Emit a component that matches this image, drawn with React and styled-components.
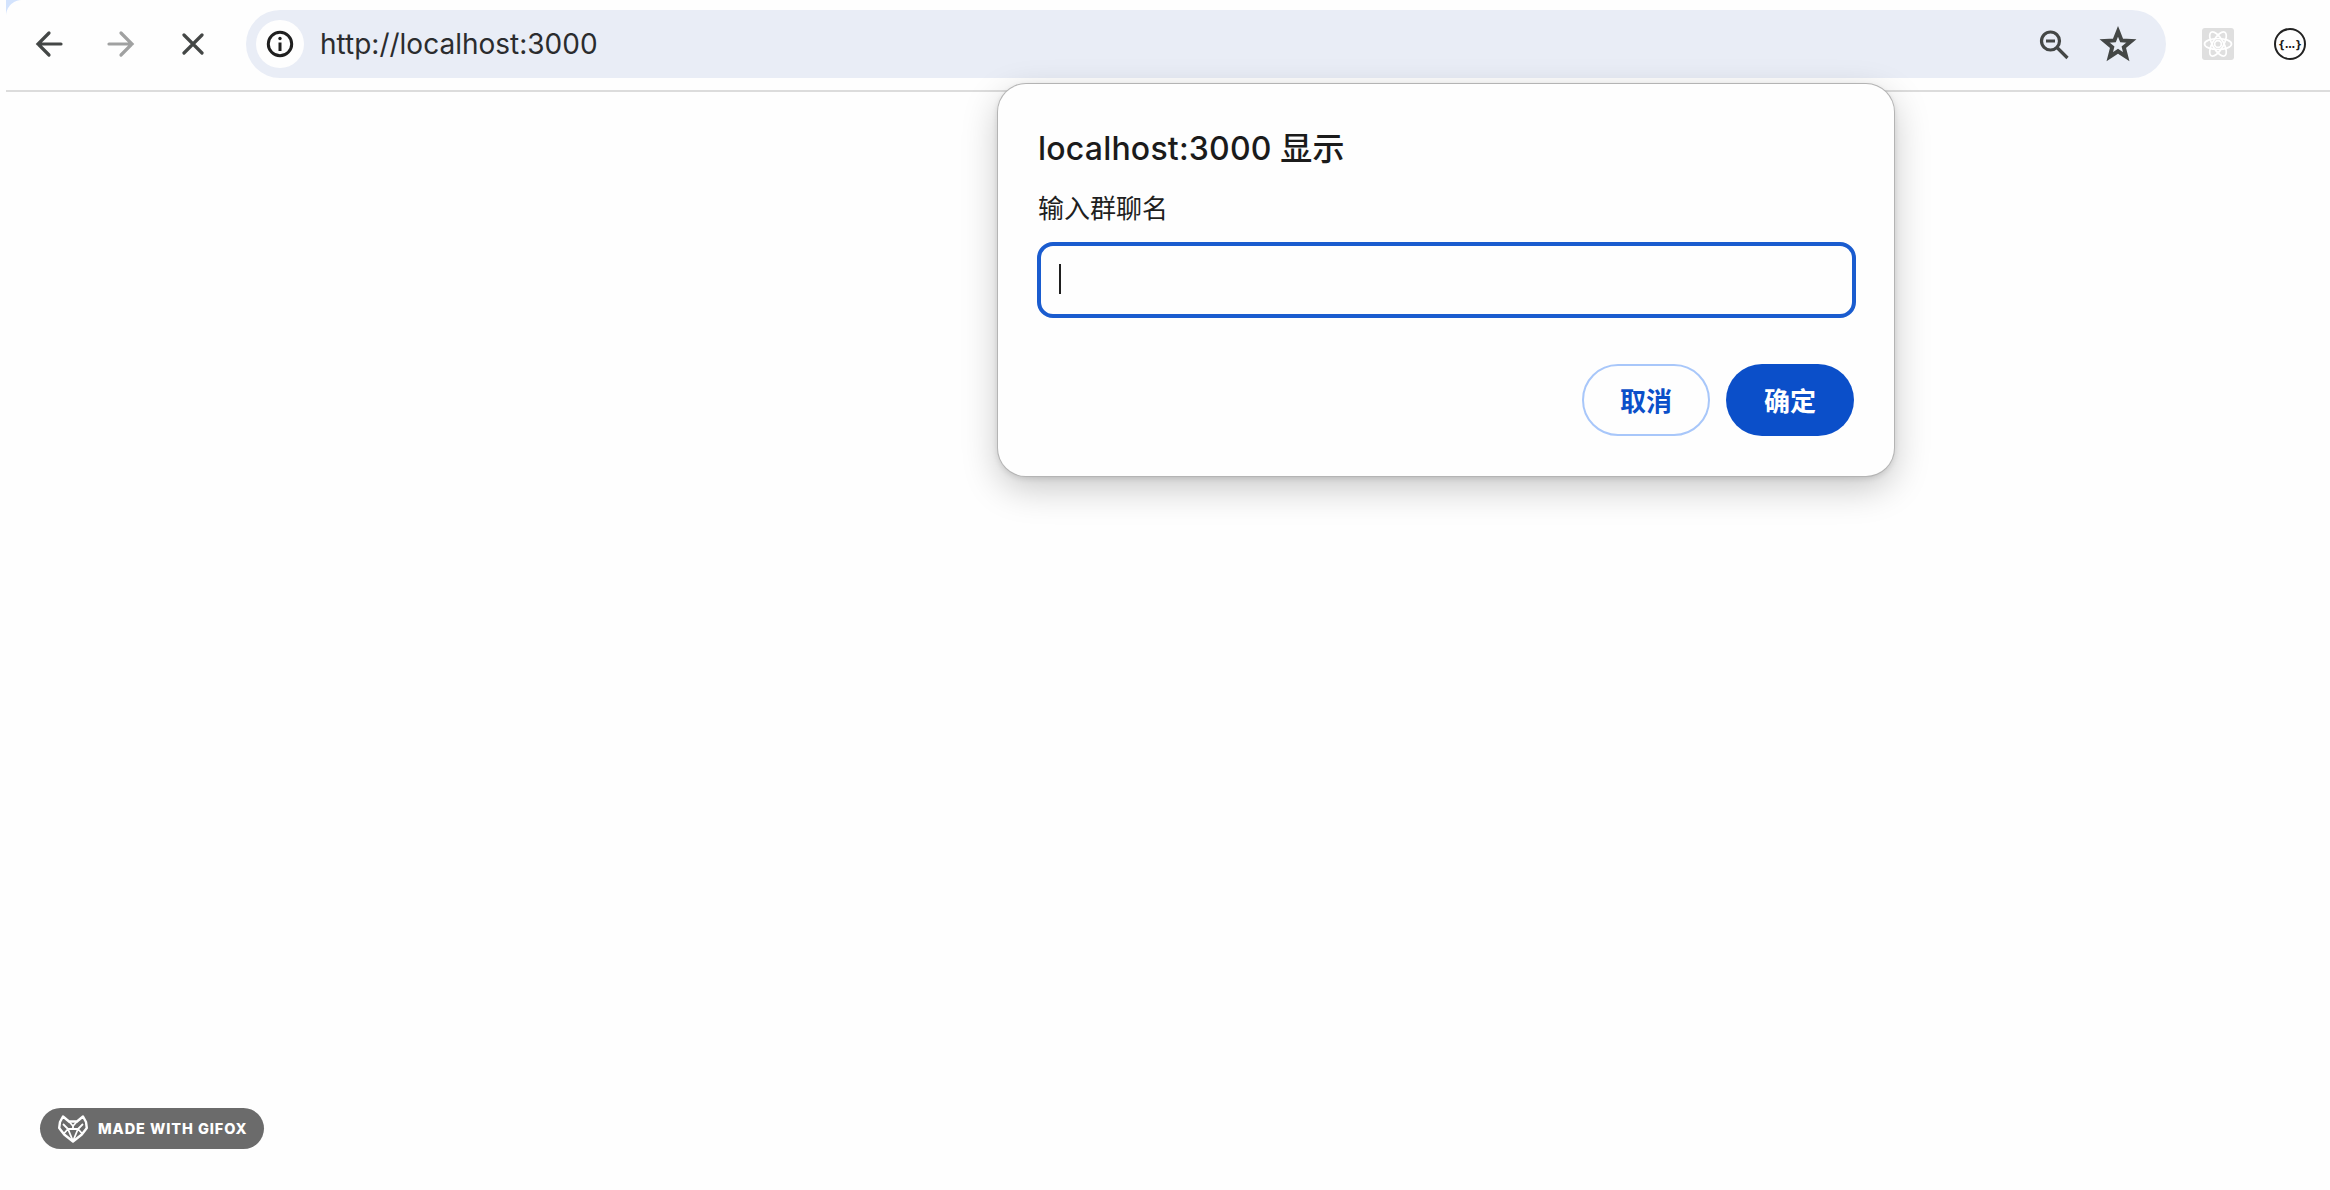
import React from 'react'
import styled, { createGlobalStyle } from 'styled-components'

const GlobalStyle = createGlobalStyle`
    html, body {
        background: #fefefe;
        height: 100%;
        margin: 0;
        overflow: hidden;
    }
    #root {
        height: 100%;
    }
`

const Page = styled.div`
    font-family: Inter, "Noto Sans CJK SC", sans-serif;
    height: 1190px;
    position: relative;
    width: 2330px;
`

const Toolbar = styled.header`
    align-items: center;
    border-bottom: 2px solid #dcdcdc;
    box-sizing: border-box;
    display: flex;
    height: 92px;
    margin-left: 6px;
    padding: 10px 0 12px 19px;
    position: relative;
`

const Corner = styled.span`
    background: radial-gradient(circle at 100% 100%, #fefefe 15.5px, #d3e3fd 16.5px);
    height: 16px;
    left: 0;
    position: absolute;
    top: 0;
    width: 16px;
`

const NavGroup = styled.nav`
    display: flex;
    gap: 24px;
    margin-right: 29px;
`

const IconButton = styled.span`
    align-items: center;
    color: ${props => props.$color || '#444746'};
    display: flex;
    height: 48px;
    justify-content: center;
    width: 48px;
`

const Omnibox = styled.div`
    align-items: center;
    background: #e9edf6;
    border-radius: 34px;
    box-sizing: border-box;
    display: flex;
    height: 68px;
    padding: 0 29px 0 10px;
    width: 1920px;
`

const SiteInfo = styled.span`
    align-items: center;
    background: #fefefe;
    border-radius: 50%;
    color: #1f1f1f;
    display: flex;
    height: 48px;
    justify-content: center;
    margin-right: 16px;
    width: 48px;
`

const Url = styled.span`
    color: #2b2c2e;
    flex: 1;
    font-size: 28px;
`

const OmniActions = styled.div`
    align-items: center;
    color: #444746;
    display: flex;
    gap: 26px;
`

const Extensions = styled.div`
    align-items: center;
    display: flex;
    gap: 40px;
    margin-left: 36px;
`

const ReactBadge = styled.span`
    align-items: center;
    background: #dfdfdf;
    border-radius: 3px;
    display: flex;
    height: 32px;
    justify-content: center;
    width: 32px;
`

const JsonBadge = styled.span`
    align-items: center;
    border: 2px solid #222;
    border-radius: 50%;
    box-sizing: border-box;
    color: #1a1a1a;
    display: flex;
    font-family: "DejaVu Sans", sans-serif;
    font-size: 10px;
    font-weight: 700;
    height: 32px;
    justify-content: center;
    width: 32px;
`

const Dialog = styled.section`
    background: #fefefe;
    border-radius: 28px;
    box-shadow: 0 0 0 1px #b4b4b4, 0 12px 36px rgba(0, 0, 0, 0.22), 0 2px 6px rgba(0, 0, 0, 0.14);
    box-sizing: border-box;
    height: 392px;
    left: 998px;
    padding: 0 40px;
    position: absolute;
    top: 84px;
    width: 896px;
`

const Title = styled.h1`
    color: #1b1b1b;
    font-size: 32px;
    font-weight: 500;
    letter-spacing: 0.2px;
    line-height: 40px;
    margin: 45px 0 0;
`

const Message = styled.p`
    color: #1f1f1f;
    font-size: 26px;
    line-height: 34px;
    margin: 23px 0 0;
`

const Field = styled.div`
    align-items: center;
    border: 4px solid #1a5ccf;
    border-radius: 16px;
    box-sizing: border-box;
    display: flex;
    height: 76px;
    margin: 16px -2px 0 -1px;
    padding: 0 0 2px 18px;
`

const Caret = styled.span`
    background: #1f1f1f;
    height: 30px;
    width: 2px;
`

const Actions = styled.div`
    display: flex;
    gap: 16px;
    justify-content: flex-end;
    margin: 46px 0 0;
`

const Button = styled.button`
    background: ${props => props.$primary ? '#0b4fc9' : '#fefefe'};
    border: ${props => props.$primary ? 'none' : '2px solid #a8c7fa'};
    border-radius: 36px;
    box-sizing: border-box;
    color: ${props => props.$primary ? '#ffffff' : '#0b4fc9'};
    font-family: Inter, "Noto Sans CJK SC", sans-serif;
    font-size: 26px;
    font-weight: 700;
    height: 72px;
    padding: 0 0 2px;
    width: 128px;
`

const GifoxBadge = styled.div`
    align-items: center;
    background: #6b6b6b;
    border-radius: 21px;
    bottom: 41px;
    box-sizing: border-box;
    color: #fff;
    display: flex;
    font-family: Inter, sans-serif;
    font-size: 14.5px;
    font-weight: 800;
    gap: 10px;
    height: 41px;
    left: 40px;
    letter-spacing: 0.93px;
    padding-left: 18px;
    position: absolute;
    width: 224px;
`

function BackIcon() {
    return (
        <svg width="28" height="28" viewBox="0 0 28 28" fill="none" stroke="currentColor" strokeWidth="3.2" strokeLinecap="round">
            <path d="M26 14H3M14 3L3 14l11 11" />
        </svg>
    )
}

function ForwardIcon() {
    return (
        <svg width="28" height="28" viewBox="0 0 28 28" fill="none" stroke="currentColor" strokeWidth="3.2" strokeLinecap="round">
            <path d="M2 14h23M14 3l11 11-11 11" />
        </svg>
    )
}

function CloseIcon() {
    return (
        <svg width="22" height="22" viewBox="0 0 22 22" fill="none" stroke="currentColor" strokeWidth="3.2" strokeLinecap="round">
            <path d="M2 2l18 18M20 2L2 20" />
        </svg>
    )
}

function InfoIcon() {
    return (
        <svg width="28" height="28" viewBox="0 0 28 28" fill="none" stroke="currentColor" strokeWidth="3">
            <circle cx="14" cy="14" r="11.7" />
            <path d="M14 12.5V21" />
            <circle cx="14" cy="8.5" r="1.7" fill="currentColor" stroke="none" />
        </svg>
    )
}

function ZoomOutIcon() {
    return (
        <svg width="40" height="40" viewBox="0 0 40 40" fill="none" stroke="currentColor" strokeWidth="3.2">
            <circle cx="17.5" cy="17" r="9" />
            <path d="M13 17h9M24.5 24L34.5 34" />
        </svg>
    )
}

function StarIcon() {
    return (
        <svg width="38" height="38" viewBox="0 0 36 36" fill="none" stroke="currentColor" strokeWidth="3.8" strokeLinejoin="miter">
            <path d="M18 6l3.4 8.6 9.2.6-7.1 5.9 2.3 9L18 24.9l-7.8 5.2 2.3-9-7.1-5.9 9.2-.6z" />
        </svg>
    )
}

function AtomIcon() {
    return (
        <svg width="30" height="30" viewBox="0 0 30 30" fill="none" stroke="#fff" strokeWidth="1.7">
            <ellipse cx="15" cy="15" rx="13.5" ry="5.5" />
            <ellipse cx="15" cy="15" rx="13.5" ry="5.5" transform="rotate(60 15 15)" />
            <ellipse cx="15" cy="15" rx="13.5" ry="5.5" transform="rotate(120 15 15)" />
            <circle cx="15" cy="15" r="3.4" />
        </svg>
    )
}

function FoxIcon() {
    return (
        <svg width="30" height="28" viewBox="0 0 30 28" fill="none" stroke="#fff" strokeWidth="1.8" strokeLinejoin="round">
            <path d="M2 7L5 1.5l6 5h8l6-5L28 7l.8 6-5 6.5L15 26.5 6.2 19.5 1.2 13z" strokeWidth="2.4" />
            <path d="M11 6.5L15 11l4-4.5M5 9l5 5 5 12 5-12 5-5M10 14h10M5.5 19L10 14M24.5 19L20 14M15 11v3" />
        </svg>
    )
}

function App() {
    return (
        <Page>
            <GlobalStyle />
            <Toolbar>
                <Corner />
                <NavGroup>
                    <IconButton><BackIcon /></IconButton>
                    <IconButton $color="#a0a1a1"><ForwardIcon /></IconButton>
                    <IconButton><CloseIcon /></IconButton>
                </NavGroup>
                <Omnibox>
                    <SiteInfo><InfoIcon /></SiteInfo>
                    <Url>http://localhost:3000</Url>
                    <OmniActions>
                        <ZoomOutIcon />
                        <StarIcon />
                    </OmniActions>
                </Omnibox>
                <Extensions>
                    <ReactBadge><AtomIcon /></ReactBadge>
                    <JsonBadge>{'{…}'}</JsonBadge>
                </Extensions>
            </Toolbar>
            <Dialog>
                <Title>localhost:3000 显示</Title>
                <Message>输入群聊名</Message>
                <Field><Caret /></Field>
                <Actions>
                    <Button>取消</Button>
                    <Button $primary>确定</Button>
                </Actions>
            </Dialog>
            <GifoxBadge>
                <FoxIcon />
                <span>MADE WITH GIFOX</span>
            </GifoxBadge>
        </Page>
    )
}

export default App
